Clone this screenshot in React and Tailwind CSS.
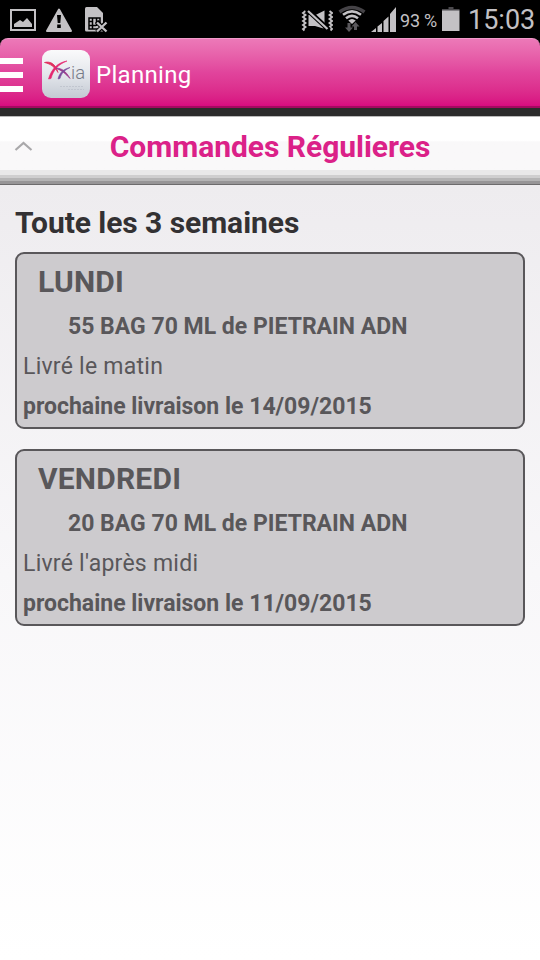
import React from "react";

const orders = [
  {
    day: "LUNDI",
    item: "55 BAG 70 ML de PIETRAIN ADN",
    slot: "Livré le matin",
    next: "prochaine livraison le 14/09/2015",
  },
  {
    day: "VENDREDI",
    item: "20 BAG 70 ML de PIETRAIN ADN",
    slot: "Livré l'après midi",
    next: "prochaine livraison le 11/09/2015",
  },
];

function NotificationIcons() {
  return (
    <svg width="110" height="38" viewBox="0 0 110 38" fill="#c3c1c4">
      {/* picture */}
      <rect x="11" y="10" width="24" height="20" fill="none" stroke="#c3c1c4" strokeWidth="2" />
      <path d="M14 27v-3l6-4 3 2 4-4 5 6v3z" />
      {/* warning */}
      <path d="M59 9.500 71 31H47z" stroke="#c3c1c4" strokeWidth="2" strokeLinejoin="round" />
      <path d="M57 15h4l-.7 8h-2.600zM57.200 24.500h3.600v3.500h-3.600z" fill="#000" />
      {/* sim card */}
      <path d="M86.500 7H97l6 6v18.500H86.500A1.500 1.500 0 0 1 85 30V8.500A1.500 1.500 0 0 1 86.500 7z" />
      <path d="M89 18h11v11H89zM92.500 18v11M96.500 18v8M89 21.500h3.500M89 25.500h7M96.500 21.500h4" fill="none" stroke="#000" strokeWidth="1.500" />
      <path d="M96.500 21.500l10 10.500M107 21.500l-10 10.500" stroke="#000" strokeWidth="4.500" />
      <path d="M97 22.500l9.500 9M106.500 22.500l-9.500 9" stroke="#c3c1c4" strokeWidth="2.400" />
    </svg>
  );
}

function VibrateIcon() {
  return (
    <svg width="32" height="38" viewBox="0 0 32 38" fill="#c3c1c4">
      <path
        d="M4.500 11l-2.500 2 2.500 2L2 17l2.500 2L2 21l2.500 2L2 25l2.500 2L2 29l1.500 1.500M28.500 11l2.500 2-2.500 2 2.500 2-2.500 2 2.500 2-2.500 2 2.500 2-2.500 2 2.500 2-1.500 1.500"
        fill="none"
        stroke="#c3c1c4"
        strokeWidth="1.900"
      />
      <path d="M7.500 15h4l11 12v1.500L14 26H7.500z" />
      <path d="M14.500 15l9-4.500v13.500z" />
      <path d="M6 9.500 28 30" stroke="#000" strokeWidth="5" />
      <path d="M7 11 26.500 29" stroke="#c3c1c4" strokeWidth="2.200" />
    </svg>
  );
}

function WifiIcon() {
  return (
    <svg width="28" height="38" viewBox="0 0 28 38" fill="none">
      <path d="M1.500 12Q14 3 26.500 12" stroke="#454347" strokeWidth="3.400" />
      <path d="M5 14.700Q14 8 23 14.700M8 18.200Q14 13.500 20 18.200" stroke="#c3c1c4" strokeWidth="2.600" />
      <path d="M10.300 20.500Q14 17.500 17.700 20.500L14 24z" fill="#c3c1c4" />
      <path d="M9.500 23h3v4.500H15L11 32l-4-4.500h2.500zM16 30v-3.500h-2.500l4-4.500 4 4.500H19V30z" fill="#5a585c" />
    </svg>
  );
}

function SignalIcon() {
  return (
    <svg width="26" height="38" viewBox="0 0 26 38" fill="#c3c1c4">
      <path d="M0 32l5-4v4zM6.500 26.500l4.500-3.500v9H6.500zM12.500 21l5-4.500V32h-5zM19 14l6-7v25h-6z" />
    </svg>
  );
}

function BatteryIcon() {
  return (
    <svg width="18" height="38" viewBox="0 0 18 38">
      <path d="M6.500 7h5v2H6.500zM0 9h17.500v2H0z" fill="#4b494d" />
      <path d="M0 10.500h17.500V31H0z" fill="#c3c1c4" />
    </svg>
  );
}

function StatusBar() {
  return (
    <div className="flex h-[38px] items-center justify-between bg-black text-[#c3c1c4]">
      <NotificationIcons />
      <div className="flex h-full items-center">
        <VibrateIcon />
        <div className="ml-[5px]"><WifiIcon /></div>
        <div className="ml-[5px]"><SignalIcon /></div>
        <span className="ml-[3px] w-[42px] whitespace-nowrap pt-[3px] text-[18px] leading-[38px] tracking-[-0.2px]">93 %</span>
        <BatteryIcon />
        <span className="ml-2 w-[72px] whitespace-nowrap pt-[2px] text-[27px] leading-[38px]">15:03</span>
      </div>
    </div>
  );
}

function Logo() {
  return (
    <div className="ml-[19px] h-12 w-12 rounded-[9px] bg-gradient-to-b from-[#fafafb] via-[#e4e7ec] to-[#c4cad3]">
      <svg width="48" height="48" viewBox="0 0 48 48">
        <path d="M2.500 12.500C8 11 13.500 13.500 16 22.500C12.500 17 9 14 2.500 12.500z" fill="#e0305f" stroke="#e0305f" strokeWidth=".8" />
        <path d="M25 11C16 12.500 9.500 18.500 6.500 29L9 28.500C11.500 20 16 14.500 25 11z" fill="#e5266f" stroke="#e5266f" strokeWidth=".6" />
        <path d="M14 18.200C20 18 24 21.500 28 28.500C23.500 23.500 20 20.500 14 18.200z" fill="#9b3a8c" stroke="#9b3a8c" strokeWidth=".8" />
        <path d="M28 17.500C21.500 19 17.500 22.500 16 29L18 28.500C19.500 23.500 22 20.500 28 17.500z" fill="#7a4b9c" stroke="#7a4b9c" strokeWidth=".6" />
        <text x="29" y="28.500" fontSize="18.500" fontFamily="Roboto, sans-serif" fontWeight="300" fill="#777b87">ia</text>
        <path d="M18 36.500h24M26 39.500h16" stroke="#b9bec8" strokeWidth=".7" strokeDasharray="2 1" />
      </svg>
    </div>
  );
}

function Header() {
  return (
    <header className="bg-black">
      <div className="flex h-[70px] items-center rounded-t-[8px] border-t border-b-2 border-t-[#f19bca] border-b-[#a30a60] bg-gradient-to-b from-[#ec79b8] via-[#e1449c] to-[#d80b80]">
        <div className="flex w-[23px] flex-col gap-[8px] pt-[5px]">
          <div className="h-[6px] bg-white" />
          <div className="h-[6px] bg-white" />
          <div className="h-[6px] bg-white" />
        </div>
        <div className="pt-[3px]"><Logo /></div>
        <h1 className="ml-[6px] pt-[4px] text-[24px] tracking-[0.3px] text-white">Planning</h1>
      </div>
      <div className="h-[8px] bg-[#2b2b2b]" />
    </header>
  );
}

function SectionTitle() {
  return (
    <div>
      <div className="relative flex h-[54px] items-center justify-center border-t border-[#b9b9b9] bg-gradient-to-b from-white from-44% to-[#f9f8f9] to-47%">
        <svg className="absolute left-[14px] top-[23px]" width="19" height="12" viewBox="0 0 19 12" fill="none">
          <path d="M1.500 10 9.500 3l8 7" stroke="#a9a8aa" strokeWidth="2.200" />
        </svg>
        <h2 className="pt-[6px] text-[30px] font-bold tracking-[-0.03px] text-[#db2188]">Commandes Régulieres</h2>
      </div>
      <div className="h-[5px] bg-[#e9e8e9]" />
      <div className="h-[3px] bg-[#cfcecf]" />
      <div className="h-[3px] bg-[#b5b4b5]" />
      <div className="h-[3px] bg-[#979597]" />
      <div className="h-px bg-[#6d6b6d]" />
    </div>
  );
}

function OrderCard({ order }) {
  return (
    <div className="h-[177px] rounded-[9px] border-2 border-[#59575a] bg-[#cdcbce] pl-[6px] pt-[8px] text-[23px] leading-[40px] text-[#59575a]">
      <h4 className="pl-[15px] text-[30px] font-bold leading-[40px] tracking-[0.2px]">{order.day}</h4>
      <p className="mt-[5px] pl-[45px] font-bold">{order.item}</p>
      <p className="tracking-[0.25px]">{order.slot}</p>
      <p className="font-bold">{order.next}</p>
    </div>
  );
}

export default function App() {
  return (
    <div className="flex h-[960px] w-[540px] flex-col overflow-hidden bg-white font-['Roboto',sans-serif]">
      <StatusBar />
      <Header />
      <SectionTitle />
      <main className="flex-1 bg-gradient-to-b from-[#eeecef] via-[#f8f7f9] to-white px-[15px] pt-[17px]">
        <h3 className="h-[50px] pt-px text-[30px] font-bold leading-[40px] tracking-[-0.05px] text-[#333133]">Toute les 3 semaines</h3>
        <div className="flex flex-col gap-5">
          {orders.map((order) => (
            <OrderCard key={order.day} order={order} />
          ))}
        </div>
      </main>
    </div>
  );
}
